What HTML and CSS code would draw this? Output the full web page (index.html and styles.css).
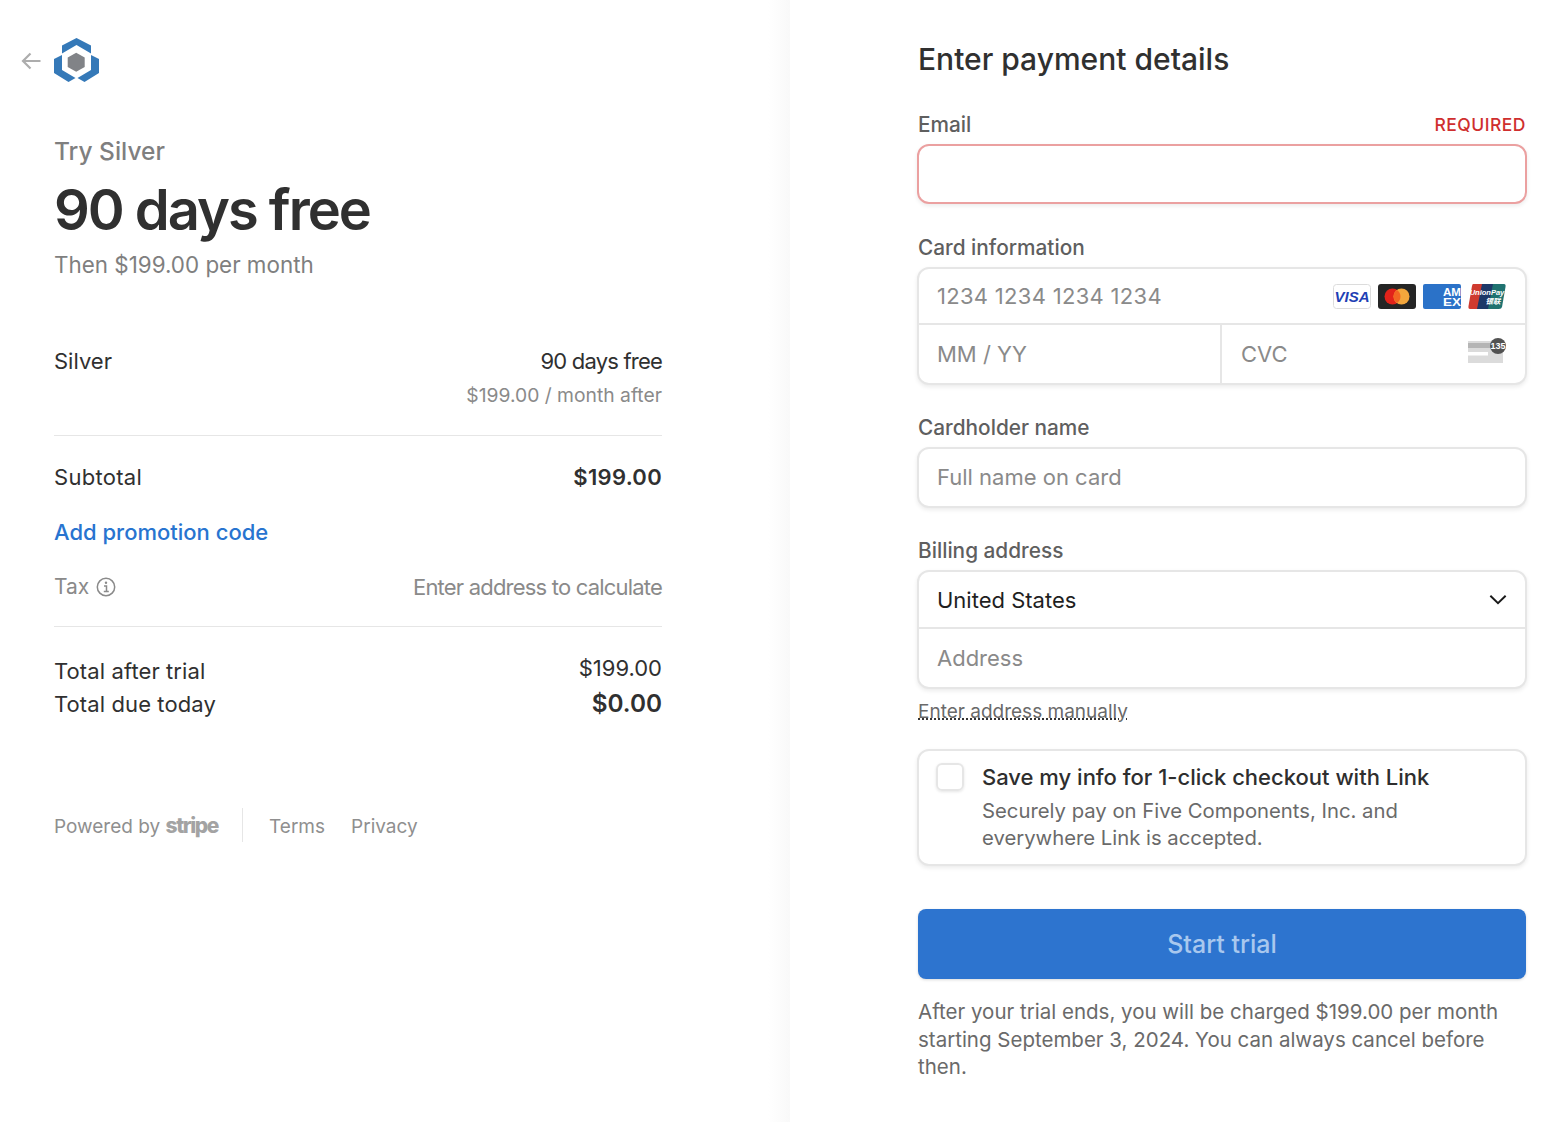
FILE: index.html
```html
<!DOCTYPE html>
<html>
    <head>
        <title>Start trial</title>
        <link rel="stylesheet" href="styles.css">
    </head>
    <body>
        <div class="mainContainer">
            <div class="summary">
                <div class="brandRow">
                    <svg class="backArrow" viewBox="0 0 20 18" width="20" height="18">
                        <path d="M19.500 9H2M9.500 1.500L2 9l7.500 7.500" fill="none" stroke="#adadad" stroke-width="2.200"/>
                    </svg>
                    <svg class="logo" viewBox="0 0 45 45" width="45" height="45">
                        <path d="M22.500 0L37 7.500V15.500L22.500 7 8 15.500V7.500Z" fill="#3579b8"/>
                        <path d="M8 17L0 21V35L14.500 44 21.500 40 8 32Z" fill="#3579b8"/>
                        <path d="M37 17L45 21V35L30.500 44 23.500 40 37 32Z" fill="#3579b8"/>
                        <path d="M22.200 14.700L30.700 19.500V29L22.200 33.700 13.700 29V19.500Z" fill="#818387"/>
                    </svg>
                </div>
                <div class="tryName">Try Silver</div>
                <div class="bigPrice">90 days free</div>
                <div class="thenPrice">Then $199.00 per month</div>

                <div class="lineItem">
                    <div class="row">
                        <span>Silver</span>
                        <span class="tight">90 days free</span>
                    </div>
                    <div class="row rowEnd muted small">$199.00 / month after</div>
                </div>

                <div class="row subtotal">
                    <span class="wide">Subtotal</span>
                    <span class="strong wide">$199.00</span>
                </div>
                <div class="promo">Add promotion code</div>
                <div class="row tax muted">
                    <span class="taxName">Tax
                        <svg viewBox="0 0 20 20" width="20" height="20">
                            <circle cx="10" cy="10" r="8.700" fill="none" stroke="#8a8a8a" stroke-width="1.500"/>
                            <circle cx="10" cy="5.800" r="1.200" fill="#8a8a8a"/>
                            <path d="M8 9h2.500v5.200M7.800 14.500h5" fill="none" stroke="#8a8a8a" stroke-width="1.500"/>
                        </svg>
                    </span>
                    <span class="tight">Enter address to calculate</span>
                </div>

                <div class="totals">
                    <div class="row">
                        <span class="totalName">Total after trial</span>
                        <span>$199.00</span>
                    </div>
                    <div class="row">
                        <span class="totalName">Total due today</span>
                        <span class="dueAmount">$0.00</span>
                    </div>
                </div>

                <div class="footer">
                    <span class="powered">Powered by <b class="stripe">stripe</b></span>
                    <span class="footLinks">
                        <span>Terms</span>
                        <span>Privacy</span>
                    </span>
                </div>
            </div>

            <div class="payment">
                <h1 class="payTitle">Enter payment details</h1>

                <div class="labelRow">
                    <span>Email</span>
                    <span class="required">REQUIRED</span>
                </div>
                <div class="box errorBox"></div>

                <div class="labelRow gap cardLabel">Card information</div>
                <div class="box">
                    <div class="field cardNumber">
                        <span class="digits">1234 1234 1234 1234</span>
                        <span class="brands">
                            <svg viewBox="0 0 38 25" width="38" height="25">
                                <rect x=".5" y=".5" width="37" height="24" rx="3" fill="#fff" stroke="#dcdcdc"/>
                                <text x="19" y="18" class="visaText">VISA</text>
                            </svg>
                            <svg viewBox="0 0 38 25" width="38" height="25">
                                <rect width="38" height="25" rx="3" fill="#252525"/>
                                <circle cx="14.500" cy="12.500" r="8" fill="#e2231a"/>
                                <circle cx="23.500" cy="12.500" r="8" fill="#f3a63c"/>
                                <path d="M19 5.900a8 8 0 0 1 0 13.200a8 8 0 0 1 0-13.200Z" fill="#f26522"/>
                            </svg>
                            <svg viewBox="0 0 38 25" width="38" height="25">
                                <rect width="38" height="25" rx="2" fill="#2b72c8"/>
                                <text x="20" y="11.500" textLength="18" lengthAdjust="spacingAndGlyphs" class="amexText">AM</text>
                                <text x="20" y="21.500" textLength="18" lengthAdjust="spacingAndGlyphs" class="amexText">EX</text>
                            </svg>
                            <svg viewBox="0 0 38 25" width="38" height="25">
                                <path d="M5 0H16L11 25H2Q0 25 .5 22L4 2Q4.500 0 5 0Z" fill="#cf3a2f"/>
                                <path d="M14 0H27L22 25H9Z" fill="#1d3868"/>
                                <path d="M25 0H36Q38 0 37.500 3L34 23Q33.500 25 31 25H20Z" fill="#1f7270"/>
                                <text x="19" y="11" class="upText">UnionPay</text>
                                <text x="25" y="20" class="upText">银联</text>
                            </svg>
                        </span>
                    </div>
                    <div class="cardBottom">
                        <div class="field expiry">MM / YY</div>
                        <div class="field cvc">
                            <span>CVC</span>
                            <svg class="cvcIcon" viewBox="0 -1 40 26" width="40" height="26">
                                <rect x="1" y="2" width="35" height="22" fill="#dbdbdb"/>
                                <rect x="1" y="4" width="35" height="5" fill="#b5b5b5"/>
                                <rect x="1" y="13" width="20" height="3.500" fill="#fff"/>
                                <circle cx="31" cy="7" r="8" fill="#525252"/>
                                <text x="31" y="10.300" class="cvcText">135</text>
                            </svg>
                        </div>
                    </div>
                </div>

                <div class="labelRow gap">Cardholder name</div>
                <div class="box">
                    <div class="field nameField">Full name on card</div>
                </div>

                <div class="labelRow gap">Billing address</div>
                <div class="box">
                    <div class="field country">
                        <span>United States</span>
                        <svg viewBox="0 0 20 12" width="18" height="11">
                            <path d="M1.500 1.800L10 10l8.500-8.200" fill="none" stroke="#1a1a1a" stroke-width="2.200"/>
                        </svg>
                    </div>
                    <div class="field addressField">Address</div>
                </div>
                <div class="manual"><span>Enter address manually</span></div>

                <div class="box linkBox">
                    <span class="check"></span>
                    <div>
                        <div class="linkTitle">Save my info for 1-click checkout with Link</div>
                        <div class="linkText">Securely pay on Five Components, Inc. and everywhere Link is accepted.</div>
                    </div>
                </div>

                <div class="startBtn"><span>Start trial</span></div>
                <p class="terms">After your trial ends, you will be charged $199.00 per month starting September 3, 2024. You can always cancel before then.</p>
            </div>
        </div>
    </body>
</html>
```

FILE: styles.css
```css
html, body, .mainContainer {
    width: 100%;
    height: 100%;
    margin: 0;
}
body {
    overflow: hidden;
    background: #fff;
    color: #303030;
    font-family: Inter, "Liberation Sans", sans-serif;
    font-size: 22px;
}
.mainContainer {
    display: flex;
}
.summary {
    flex-shrink: 0;
    width: 790px;
    height: 1122px;
    box-sizing: border-box;
    padding: 38px 128px 0 54px;
    background: linear-gradient(90deg, #fff 768px, #f9f9f9 790px);
}
.payment {
    flex-grow: 1;
    min-width: 0;
    box-sizing: border-box;
    padding: 0 32px 0 128px;
}
.row {
    display: flex;
    justify-content: space-between;
}
.rowEnd {
    justify-content: flex-end;
}
.muted {
    color: #8a8a8a;
}
.small {
    font-size: 19.300px;
}
.strong {
    font-weight: 600;
}
.tight {
    letter-spacing: -0.8px;
}
.wide {
    letter-spacing: .3px;
}

/* left side */
.brandRow {
    display: flex;
    height: 45px;
    margin-left: -33px;
    align-items: center;
    gap: 13px;
}
.logo {
    display: block;
}
.tryName {
    margin-top: 53px;
    height: 30px;
    line-height: 30px;
    font-size: 24.500px;
    font-weight: 500;
    color: #7f7f7f;
}
.bigPrice {
    margin-top: 11px;
    height: 66px;
    line-height: 66px;
    font-size: 56px;
    font-weight: 600;
    letter-spacing: -2px;
    white-space: nowrap;
}
.thenPrice {
    margin-top: 7px;
    height: 30px;
    line-height: 30px;
    font-size: 22.400px;
    color: #7f7f7f;
}
.lineItem {
    margin-top: 66px;
    padding-bottom: 15px;
    border-bottom: 1px solid #e6e6e6;
    line-height: 30px;
    height: 74px;
}
.lineItem .small {
    margin-top: 4px;
}
.subtotal {
    margin-top: 26px;
    line-height: 30px;
}
.promo {
    margin-top: 25px;
    line-height: 30px;
    color: #2874d0;
    font-weight: 500;
}
.tax {
    margin-top: 25px;
    height: 54px;
    line-height: 30px;
    border-bottom: 1px solid #e6e6e6;
}
.taxName {
    display: flex;
    align-items: center;
    gap: 7px;
    height: 30px;
    font-size: 21px;
}
.totals {
    margin-top: 25px;
    line-height: 33px;
}
.totalName {
    position: relative;
    top: 3px;
    letter-spacing: .1px;
}
.dueAmount {
    position: relative;
    top: 2px;
    font-size: 24.300px;
    font-weight: 600;
}
.footer {
    display: flex;
    align-items: center;
    margin-top: 90px;
    height: 34px;
    line-height: 36px;
    font-size: 19px;
    color: #8f8f8f;
}
.powered {
    padding-right: 24px;
    height: 34px;
    border-right: 1px solid #e6e6e6;
}
.stripe {
    font-weight: 800;
    font-size: 21px;
    letter-spacing: -1.400px;
    color: #a3a3a3;
}
.footLinks {
    display: flex;
    gap: 26px;
    margin-left: 26px;
    padding-top: 4px;
}

/* right side */
.payTitle {
    margin: 0;
    padding-top: 39px;
    height: 40px;
    line-height: 40px;
    font-size: 30px;
    font-weight: 500;
}
.labelRow {
    display: flex;
    justify-content: space-between;
    align-items: center;
    margin-top: 31px;
    height: 30px;
    line-height: 30px;
    font-size: 20.800px;
    font-weight: 500;
    color: #5f5f5f;
}
.labelRow.gap {
    margin-top: 28px;
}
.labelRow.cardLabel {
    margin-top: 29px;
}
.required {
    font-size: 17.500px;
    font-weight: 500;
    letter-spacing: .5px;
    color: #cf2e2e;
}
.box {
    margin: 4px -1px 0;
    border: 2px solid #e6e6e6;
    border-radius: 12px;
    box-shadow: 0 2px 4px rgba(0, 0, 0, 0.08);
    background: #fff;
}
.errorBox {
    height: 56px;
    border-color: #eba0a0;
}
.field {
    display: flex;
    align-items: center;
    justify-content: space-between;
    box-sizing: border-box;
    padding: 0 18px;
    color: #8a8a8a;
}
.digits {
    letter-spacing: .3px;
}
.cardNumber {
    height: 56px;
    border-bottom: 2px solid #e6e6e6;
}
.brands {
    display: flex;
    gap: 7px;
    margin-right: 1px;
}
.visaText {
    text-anchor: middle;
    font: italic 700 15px "Liberation Sans", sans-serif;
    fill: #1f3fb5;
}
.amexText {
    font: 700 10.500px "Liberation Sans", sans-serif;
    fill: #fff;
}
.upText {
    text-anchor: middle;
    font: italic 700 7.500px "Liberation Sans", "Noto Sans CJK SC", sans-serif;
    fill: #fff;
}
.cardBottom {
    display: flex;
    height: 58px;
}
.expiry {
    width: 303px;
    height: 58px;
    border-right: 2px solid #e6e6e6;
}
.cvc {
    flex-grow: 1;
    padding-left: 19px;
}
.cvcIcon {
    margin-bottom: 6px;
}
.cvcText {
    text-anchor: middle;
    font: 700 9px "Liberation Sans", sans-serif;
    fill: #fff;
}
.nameField {
    height: 57px;
    padding-bottom: 2px;
}
.country {
    height: 57px;
    color: #1f1f1f;
    border-bottom: 2px solid #e6e6e6;
}
.addressField {
    height: 58px;
}
.manual {
    margin-top: 8px;
    height: 30px;
    line-height: 30px;
    font-size: 19px;
    color: #6a6a6a;
}
.manual span {
    text-decoration: underline dotted #333;
    text-underline-offset: 1px;
}
.linkBox {
    display: flex;
    gap: 18px;
    margin-top: 22px;
    height: 113px;
    padding: 0 24px 0 17px;
    line-height: 27px;
}
.check {
    flex-shrink: 0;
    width: 24px;
    height: 24px;
    margin-top: 12px;
    border: 2px solid #e6e6e6;
    border-radius: 6px;
    box-shadow: 0 1px 3px rgba(0, 0, 0, 0.1);
}
.linkTitle {
    margin-top: 13px;
    font-weight: 500;
    color: #2e2e2e;
}
.linkText {
    margin-top: 6px;
    font-size: 20.300px;
    color: #6a6a6a;
}
.startBtn {
    display: flex;
    align-items: center;
    justify-content: center;
    margin-top: 43px;
    height: 70px;
    border-radius: 8px;
    background: #2d74cf;
    box-shadow: 0 1px 3px rgba(0, 0, 0, 0.15);
    color: #a9c8ee;
    font-size: 25px;
    font-weight: 500;
}
.terms {
    margin: 19px 0 0;
    line-height: 27.500px;
    font-size: 20.500px;
    color: #6a6a6a;
}
```
